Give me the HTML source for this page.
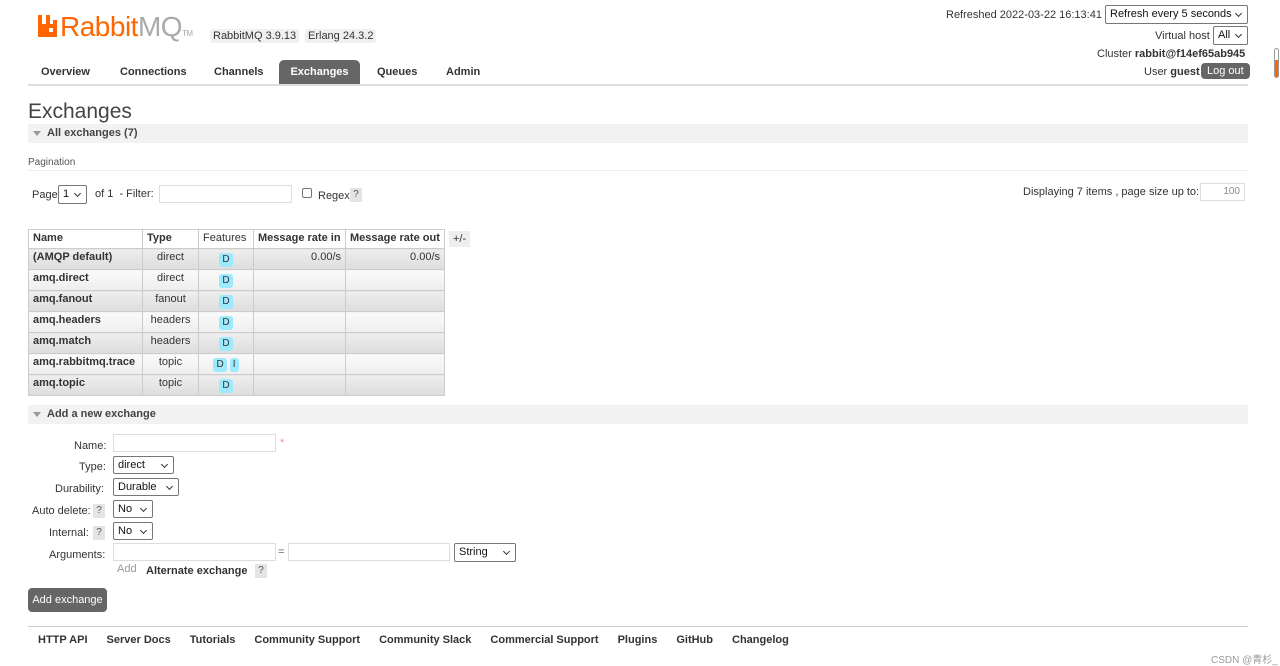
<!DOCTYPE html>
<html><head><meta charset="utf-8"><style>
*{box-sizing:border-box}
body{margin:0;width:1280px;height:666px;overflow:hidden;background:#fff;font-family:"Liberation Sans",sans-serif;font-size:11px;color:#333;position:relative}
.a{position:absolute;white-space:nowrap}
.b{font-weight:bold}
.sel{position:absolute;border:1px solid #767676;border-radius:2px;background:#fff;font-size:11px;padding:2px 4px;color:#111}
.sel:after{content:"";position:absolute;right:6px;top:5px;width:4px;height:4px;border-right:1.3px solid #333;border-bottom:1.3px solid #333;transform:rotate(45deg)}
.inp{position:absolute;border:1px solid #ddd;height:18px;background:#fff}
.q{position:absolute;background:#e4e4e4;color:#555;width:12px;height:14px;text-align:center;font-size:10px;line-height:14px}
.sec{position:absolute;left:28px;width:1220px;height:19px;background:#f2f2f2;font-weight:bold;font-size:11px;line-height:19px;padding-left:19px;color:#444}
.sec:before{content:"";position:absolute;left:5px;top:7px;border-left:4px solid transparent;border-right:4px solid transparent;border-top:5px solid #999}
table{position:absolute;left:28px;top:229px;border-collapse:collapse}
td,th{border:1px solid #ccc;height:21px;padding:2px 4px;vertical-align:top;font-size:11px;line-height:13px}
th{height:19px;background:#fff;text-align:left}
td.n{font-weight:bold}
tr.g td{background:linear-gradient(#eee,#ddd)}
tr.w td{background:linear-gradient(#fafafa,#eee)}
.f{display:inline-block;background:#9deaff;color:#333;border-radius:3px;padding:1px 3px;font-size:10px;line-height:12px;margin-top:2px;vertical-align:top}
.foot a{margin-right:19px}
</style></head><body>
<div class="a" style="left:37px;top:14px;width:22px;height:22px">
<svg width="22" height="24" viewBox="0 0 22 24"><path d="M1 1h4v9h4V1h4v9h3v-4h4v17H1z" fill="#f60"/><rect x="12" y="14" width="4" height="4" fill="#fff"/></svg></div>
<div class="a" style="left:60px;top:11px;font-size:28px;color:#f60;letter-spacing:-0.5px">Rabbit<span style="color:#aaa">MQ</span><span style="font-size:8px;color:#aaa">TM</span></div>
<div class="a" style="left:210px;top:29px;background:#f0f0f0;padding:1px 3px;border-radius:3px">RabbitMQ 3.9.13</div>
<div class="a" style="left:305px;top:29px;background:#f0f0f0;padding:1px 3px;border-radius:3px">Erlang 24.3.2</div>
<div class="a b" style="left:41px;top:66px">Overview</div>
<div class="a b" style="left:120px;top:66px">Connections</div>
<div class="a b" style="left:214px;top:66px">Channels</div>
<div class="a b" style="left:279px;top:60px;width:81px;height:25px;background:#666;color:#fff;border-radius:5px 5px 0 0;text-align:center;line-height:24px">Exchanges</div>
<div class="a b" style="left:377px;top:66px">Queues</div>
<div class="a b" style="left:446px;top:66px">Admin</div>
<div class="a" style="left:28px;top:84px;width:1220px;height:2px;background:#ddd"></div>
<div class="a" style="left:946px;top:9px">Refreshed 2022-03-22 16:13:41</div>
<div class="sel" style="left:1105px;top:5px;width:143px;height:19px">Refresh every 5 seconds</div>
<div class="a" style="left:1155px;top:30px">Virtual host</div>
<div class="sel" style="left:1213px;top:26px;width:35px;height:19px">All</div>
<div class="a" style="left:1097px;top:48px">Cluster <b>rabbit@f14ef65ab945</b></div>
<div class="a" style="left:1144px;top:66px">User <b>guest</b></div>
<div class="a" style="left:1201px;top:63px;background:#666;color:#fff;border-radius:4px;padding:2px 6px">Log out</div>
<div class="a" style="left:1274px;top:48px;width:5px;height:30px;border:1px solid #999;border-radius:3px;background:linear-gradient(#fff 40%,#f60 40%)"></div>
<div class="a" style="left:28px;top:100px;font-size:21px;color:#444">Exchanges</div>
<div class="sec" style="top:124px">All exchanges (7)</div>
<div class="a" style="left:28px;top:157px;font-size:10px;color:#555">Pagination</div>
<div class="a" style="left:28px;top:170px;width:1220px;height:1px;background:#eee"></div>
<div class="a" style="left:32px;top:189px">Page</div>
<div class="sel" style="left:58px;top:185px;width:29px;height:19px">1</div>
<div class="a" style="left:95px;top:188px">of 1 &nbsp;- Filter:</div>
<div class="inp" style="left:159px;top:185px;width:133px"></div>
<div class="a" style="left:302px;top:188px;width:10px;height:10px;border:1px solid #777;border-radius:2px"></div>
<div class="a" style="left:318px;top:190px">Regex</div>
<div class="q" style="left:350px;top:188px">?</div>
<div class="a" style="left:1023px;top:186px">Displaying 7 items , page size up to:</div>
<div class="inp" style="left:1200px;top:183px;width:45px;text-align:right;color:#888;font-size:10px;padding:2px 4px">100</div>
<table>
<tr><th style="width:114px">Name</th><th style="width:56px">Type</th><th style="width:55px;font-weight:normal">Features</th><th style="width:92px">Message rate in</th><th style="width:99px">Message rate out</th></tr>
<tr class="g"><td class="n">(AMQP default)</td><td style="text-align:center">direct</td><td style="text-align:center"><span class="f">D</span></td><td style="text-align:right">0.00/s</td><td style="text-align:right">0.00/s</td></tr>
<tr class="w"><td class="n">amq.direct</td><td style="text-align:center">direct</td><td style="text-align:center"><span class="f">D</span></td><td></td><td></td></tr>
<tr class="g"><td class="n">amq.fanout</td><td style="text-align:center">fanout</td><td style="text-align:center"><span class="f">D</span></td><td></td><td></td></tr>
<tr class="w"><td class="n">amq.headers</td><td style="text-align:center">headers</td><td style="text-align:center"><span class="f">D</span></td><td></td><td></td></tr>
<tr class="g"><td class="n">amq.match</td><td style="text-align:center">headers</td><td style="text-align:center"><span class="f">D</span></td><td></td><td></td></tr>
<tr class="w"><td class="n">amq.rabbitmq.trace</td><td style="text-align:center">topic</td><td style="text-align:center"><span class="f">D</span> <span class="f">I</span></td><td></td><td></td></tr>
<tr class="g"><td class="n">amq.topic</td><td style="text-align:center">topic</td><td style="text-align:center"><span class="f">D</span></td><td></td><td></td></tr>
</table>
<div class="a" style="left:449px;top:231px;background:#eee;padding:2px 4px">+/-</div>
<div class="sec" style="top:405px">Add a new exchange</div>
<div class="a" style="left:74px;top:440px">Name:</div>
<div class="inp" style="left:113px;top:434px;width:163px"></div>
<div class="a" style="left:280px;top:437px;color:#f88">*</div>
<div class="a" style="left:79px;top:461px">Type:</div>
<div class="sel" style="left:113px;top:456px;width:61px;height:18px">direct</div>
<div class="a" style="left:55px;top:483px">Durability:</div>
<div class="sel" style="left:113px;top:478px;width:66px;height:18px">Durable</div>
<div class="a" style="left:32px;top:505px">Auto delete:</div><div class="q" style="left:93px;top:504px">?</div>
<div class="sel" style="left:113px;top:500px;width:40px;height:18px">No</div>
<div class="a" style="left:49px;top:527px">Internal:</div><div class="q" style="left:93px;top:526px">?</div>
<div class="sel" style="left:113px;top:522px;width:40px;height:18px">No</div>
<div class="a" style="left:49px;top:549px">Arguments:</div>
<div class="inp" style="left:113px;top:543px;width:163px"></div>
<div class="a" style="left:278px;top:546px;color:#666">=</div>
<div class="inp" style="left:288px;top:543px;width:162px"></div>
<div class="sel" style="left:454px;top:543px;width:62px;height:19px">String</div>
<div class="a" style="left:117px;top:563px;color:#999">Add</div>
<div class="a b" style="left:146px;top:565px">Alternate exchange</div>
<div class="q" style="left:255px;top:564px">?</div>
<div class="a" style="left:28px;top:588px;width:79px;height:24px;background:#666;color:#fff;border-radius:4px;line-height:24px;text-align:center">Add exchange</div>
<div class="a" style="left:28px;top:626px;width:1220px;height:1px;background:#ccc"></div>
<div class="a b foot" style="left:38px;top:634px"><a>HTTP API</a><a>Server Docs</a><a>Tutorials</a><a>Community Support</a><a>Community Slack</a><a>Commercial Support</a><a>Plugins</a><a>GitHub</a><a>Changelog</a></div>
<div class="a" style="left:1211px;top:651px;font-size:10px;color:#999;font-family:'Liberation Sans','Noto Sans CJK SC',sans-serif">CSDN @青杉_</div>
</body></html>
